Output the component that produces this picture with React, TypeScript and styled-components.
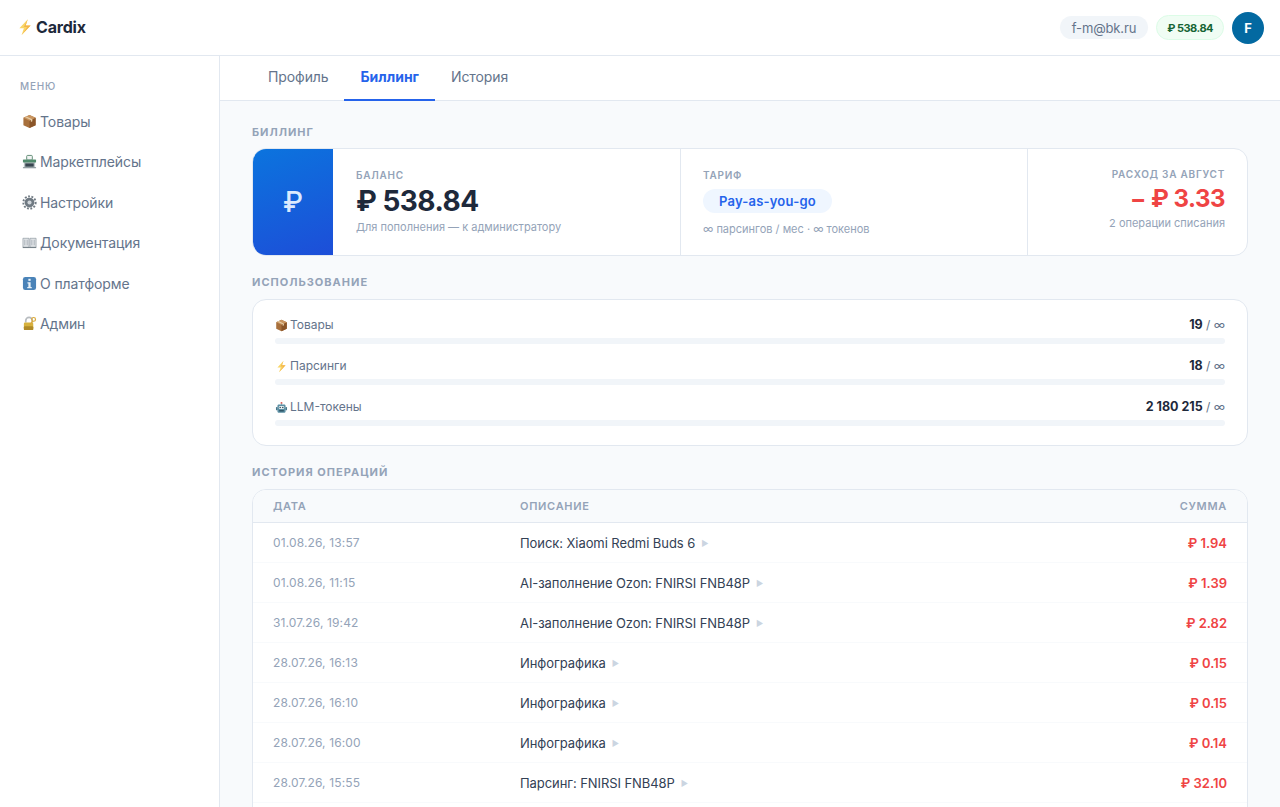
import * as React from 'react';
import styled, { createGlobalStyle } from 'styled-components';

const Global = createGlobalStyle`
  html, body {
    margin: 0;
    height: 100%;
    overflow: hidden;
    background: #f8fafc;
    font-family: Inter, "Noto Sans", sans-serif;
    color: #1e293b;
  }
  * { box-sizing: border-box; }
`;

const Page = styled.div`
  display: flex;
  flex-direction: column;
  height: 807px;
  overflow: hidden;
`;

const Header = styled.header`
  flex: 0 0 56px;
  display: flex;
  align-items: center;
  justify-content: space-between;
  padding: 0 16px;
  background: #fff;
  border-bottom: 1px solid #e2e8f0;
`;

const Logo = styled.div`
  display: flex;
  align-items: center;
  gap: 2px;
  margin-bottom: 2px;
  font-size: 16px;
  font-weight: 700;
  letter-spacing: -0.2px;
  color: #1e293b;
`;

const HeaderRight = styled.div`
  display: flex;
  align-items: center;
  gap: 8px;
`;

const EmailPill = styled.div`
  height: 23px;
  padding: 0 12px;
  display: flex;
  align-items: center;
  border-radius: 12px;
  background: #f1f5f9;
  color: #64748b;
  font-size: 13px;
  letter-spacing: -0.15px;
`;

const BalancePill = styled.div`
  height: 25px;
  padding: 0 10px;
  display: flex;
  align-items: center;
  border-radius: 13px;
  background: #f0fdf4;
  border: 1px solid #dcfce7;
  color: #166534;
  font-size: 11px;
  font-weight: 700;
  letter-spacing: -0.5px;
`;

const Avatar = styled.div`
  width: 32px;
  height: 32px;
  border-radius: 50%;
  background: #0369a1;
  color: #fff;
  font-size: 13px;
  font-weight: 700;
  display: flex;
  align-items: center;
  justify-content: center;
`;

const Body = styled.div`
  flex: 1;
  display: flex;
  min-height: 0;
`;

const Sidebar = styled.aside`
  flex: 0 0 220px;
  background: #fff;
  border-right: 1px solid #e2e8f0;
  padding: 24px 12px;
`;

const MenuTitle = styled.div`
  font-size: 10px;
  font-weight: 500;
  letter-spacing: 0.8px;
  line-height: 12px;
  color: #94a3b8;
  padding: 0 8px;
  margin-bottom: 9px;
`;

const MenuItem = styled.div`
  height: 40.5px;
  display: flex;
  align-items: center;
  gap: 3px;
  padding: 0 10px;
  font-size: 14px;
  letter-spacing: -0.1px;
  color: #64748b;
`;

const Main = styled.main`
  flex: 1;
  min-width: 0;
  display: flex;
  flex-direction: column;
`;

const Tabs = styled.nav`
  flex: 0 0 45px;
  min-height: 0;
  display: flex;
  padding: 0 32px;
  background: #fff;
  border-bottom: 1px solid #e2e8f0;
`;

const Tab = styled.div<{ $active?: boolean }>`
  padding: 0 16px 3px;
  height: 45px;
  display: flex;
  align-items: center;
  font-size: 14px;
  letter-spacing: ${p => (p.$active ? '0' : '-0.1px')};
  font-weight: ${p => (p.$active ? 700 : 400)};
  color: ${p => (p.$active ? '#2563eb' : '#64748b')};
  border-bottom: 2px solid ${p => (p.$active ? '#2563eb' : 'transparent')};
`;

const Content = styled.div`
  flex: 1;
  padding: 25px 32px 24px;
  background: #f8fafc;
`;

const SectionTitle = styled.h2`
  margin: 0 0 10px;
  font-size: 11px;
  line-height: 13px;
  font-weight: 700;
  letter-spacing: 1px;
  color: #94a3b8;
`;

const BillingCard = styled.section`
  display: flex;
  height: 108px;
  background: #fff;
  border: 1px solid #e2e8f0;
  border-radius: 14px;
  overflow: hidden;
  margin: -1px 0 20px;
`;

const RubleTile = styled.div`
  flex: 0 0 81px;
  background: linear-gradient(160deg, #0b74de, #1d4ed8);
  background-clip: padding-box;
  border-right: 1px solid #fff;
  color: #dbeafe;
  font-size: 28px;
  font-weight: 500;
  display: flex;
  align-items: center;
  justify-content: center;
`;

const Stat = styled.div<{ $width: number; $right?: boolean; $lift?: number }>`
  flex: ${p => (p.$width ? `0 0 ${p.$width}px` : '1')};
  display: flex;
  flex-direction: column;
  justify-content: center;
  padding: 0 22px ${p => p.$lift ?? 0}px;
  align-items: ${p => (p.$right ? 'flex-end' : 'flex-start')};
  border-right: ${p => (p.$right ? 'none' : '1px solid #e2e8f0')};
`;

const StatLabel = styled.div`
  font-size: 10px;
  line-height: 12px;
  font-weight: 600;
  letter-spacing: 0.75px;
  color: #94a3b8;
`;

const BalanceValue = styled.div`
  font-size: 28px;
  line-height: 34px;
  font-weight: 700;
  letter-spacing: -0.5px;
  color: #1e293b;
  margin-top: 3px;
`;

const SpendValue = styled.div`
  font-size: 24px;
  line-height: 30px;
  font-weight: 700;
  letter-spacing: -0.5px;
  color: #ef4444;
  margin-top: 4px;
`;

const StatHint = styled.div`
  font-size: 11px;
  line-height: 14px;
  color: #94a3b8;
  margin-top: 2px;
`;

const PlanPill = styled.div`
  height: 24px;
  margin: 8px 0 7px;
  padding: 0 16px;
  display: flex;
  align-items: center;
  border-radius: 12px;
  background: #eff6ff;
  color: #2563eb;
  font-size: 13px;
  font-weight: 600;
  letter-spacing: 0.2px;
`;

const UsageCard = styled.section`
  background: #fff;
  border: 1px solid #e2e8f0;
  border-radius: 14px;
  padding: 15px 22px 19px;
  margin-bottom: 20px;
  display: flex;
  flex-direction: column;
  gap: 12px;
`;

const UsageRow = styled.div`
  display: flex;
  flex-direction: column;
  gap: 3px;
`;

const UsageHead = styled.div`
  display: flex;
  justify-content: space-between;
  align-items: center;
  font-size: 12px;
  line-height: 20px;
  color: #64748b;
`;

const UsageName = styled.span`
  display: flex;
  align-items: center;
  gap: 2px;
`;

const UsageCount = styled.b`
  font-size: 12.5px;
  font-weight: 700;
  color: #1e293b;
`;

const Track = styled.div`
  height: 6px;
  border-radius: 3px;
  background: #f1f5f9;
`;

const HistoryCard = styled.section`
  min-height: 340px;
  background: #fff;
  border: 1px solid #e2e8f0;
  border-radius: 14px 14px 0 0;
  overflow: hidden;
`;

const Row = styled.div`
  display: grid;
  grid-template-columns: 247px 1fr auto;
  align-items: center;
  height: 40px;
  padding: 0 20px;
  border-bottom: 1px solid #f8fafc;
`;

const HeadRow = styled(Row)`
  height: 33px;
  padding-bottom: 1px;
  background: #f8fafc;
  border-bottom: 1px solid #e2e8f0;
  font-size: 11px;
  font-weight: 600;
  letter-spacing: 0.7px;
  color: #94a3b8;
`;

const DateCell = styled.div`
  font-size: 12px;
  letter-spacing: 0.13px;
  color: #94a3b8;
`;

const DescCell = styled.div`
  display: flex;
  align-items: center;
  gap: 6px;
  font-size: 13px;
  letter-spacing: -0.07px;
  color: #334155;
`;

const Caret = styled.span`
  font-size: 8px;
  color: #cbd5e1;
`;

const AmountCell = styled.div`
  font-size: 13px;
  font-weight: 600;
  color: #ef4444;
  text-align: right;
`;

const Emoji = styled.svg`
  flex: none;
  display: block;
`;

type IconProps = { size?: number };

const BoxIcon = ({ size = 15 }: IconProps) => (
  <Emoji width={size} height={size} viewBox="0 0 16 16">
    <path d="M8 1l6.5 3v8L8 15l-6.5-3V4z" fill="#a8703c" />
    <path d="M8 7.2l6.5-3.2v8L8 15z" fill="#8a5528" />
    <path d="M1.5 4L8 1l6.5 3L8 7.2z" fill="#c99560" />
    <path d="M4.5 2.6l6.5 3.1v2l-1.5.8v-2L3 3.3z" fill="#e6cfa8" />
  </Emoji>
);

const BoltIcon = ({ size = 15 }: IconProps) => (
  <Emoji width={size} height={size} viewBox="0 0 16 16">
    <path d="M10.5 1L3 9.2h4L5 15l8-8.4H8.6z" fill="#f9d667" />
    <path d="M10.5 1L8.6 6.6H13l-8 8.4 5-7H7z" fill="#f3b44a" />
  </Emoji>
);

const StoreIcon = ({ size = 15 }: IconProps) => (
  <Emoji width={size} height={size} viewBox="0 0 16 16">
    <rect x="2" y="6" width="12" height="9" fill="#b9c2c4" />
    <rect x="5" y="1.5" width="6" height="5" rx="1" fill="#f2f4f4" stroke="#5d8a72" strokeWidth="1" />
    <rect x="1" y="6" width="14" height="3" fill="#4f8a6b" />
    <rect x="3.5" y="10" width="9" height="3.5" fill="#384650" />
    <rect x="1" y="14" width="14" height="1.2" fill="#8b989c" />
  </Emoji>
);

const GearIcon = ({ size = 15 }: IconProps) => (
  <Emoji width={size} height={size} viewBox="0 0 16 16">
    <circle cx="8" cy="8" r="6.6" fill="none" stroke="#6f7982" strokeWidth="2" strokeDasharray="2 1.6" />
    <circle cx="8" cy="8" r="5.2" fill="#6f7982" />
    <circle cx="8" cy="8" r="2.2" fill="#cfd5da" />
  </Emoji>
);

const BookIcon = ({ size = 15 }: IconProps) => (
  <Emoji width={size} height={size} viewBox="0 0 16 16">
    <path d="M1 3.5h6.5V13H1z" fill="#e3e6e9" stroke="#8a949c" strokeWidth=".7" />
    <path d="M8.5 3.5H15V13H8.5z" fill="#e3e6e9" stroke="#8a949c" strokeWidth=".7" />
    <path d="M3 5v6M5.5 5v6M10.5 5v6M13 5v6" stroke="#98a2aa" strokeWidth=".8" />
    <path d="M0.8 13.4h14.4" stroke="#6d7880" strokeWidth="1" />
  </Emoji>
);

const InfoIcon = ({ size = 15 }: IconProps) => (
  <Emoji width={size} height={size} viewBox="0 0 16 16">
    <rect x="1" y="1" width="14" height="14" rx="2.5" fill="#4a83b8" />
    <rect x="6.8" y="3" width="2.4" height="2.2" fill="#e8f1f8" />
    <path d="M5.8 6.6h3.4v5h1.2v1.4H5.6v-1.4h1.2V8H5.8z" fill="#e8f1f8" />
  </Emoji>
);

const LockIcon = ({ size = 15 }: IconProps) => (
  <Emoji width={size} height={size} viewBox="0 0 16 16">
    <path d="M4 7V5a3.5 3.5 0 017 0v2" fill="none" stroke="#b8bcc0" strokeWidth="1.8" />
    <rect x="2" y="7" width="10" height="8" rx="1.2" fill="#d7b23e" />
    <rect x="2" y="11" width="10" height="4" rx="1" fill="#b08a28" />
    <circle cx="12.4" cy="3.6" r="2" fill="none" stroke="#d9a83a" strokeWidth="1.3" />
    <path d="M11.4 5.2L8.6 9.4" stroke="#d9a83a" strokeWidth="1.3" />
  </Emoji>
);

const RobotIcon = ({ size = 15 }: IconProps) => (
  <Emoji width={size} height={size} viewBox="0 0 16 16">
    <circle cx="8" cy="2.4" r="1.2" fill="#e0564f" />
    <rect x="7.5" y="3" width="1" height="2" fill="#8ca0ab" />
    <path d="M3 6c0-1 1-1.6 2-1.6h6c1 0 2 .6 2 1.6v7c0 1-1 1.6-2 1.6H5c-1 0-2-.6-2-1.6z" fill="#5a8ea3" />
    <rect x="1.2" y="7.5" width="2" height="4" rx=".8" fill="#47788c" />
    <rect x="12.8" y="7.5" width="2" height="4" rx=".8" fill="#47788c" />
    <rect x="4.6" y="6.2" width="6.8" height="3.6" rx="1.6" fill="#e8f0f3" />
    <circle cx="6.4" cy="8" r=".9" fill="#27424f" />
    <circle cx="9.6" cy="8" r=".9" fill="#27424f" />
    <rect x="5" y="11" width="6" height="2" rx=".6" fill="#2f5566" />
  </Emoji>
);

const menu = [
  { icon: <BoxIcon />, label: 'Товары' },
  { icon: <StoreIcon />, label: 'Маркетплейсы' },
  { icon: <GearIcon />, label: 'Настройки' },
  { icon: <BookIcon />, label: 'Документация' },
  { icon: <InfoIcon />, label: 'О платформе' },
  { icon: <LockIcon />, label: 'Админ' },
];

const usage = [
  { icon: <BoxIcon size={13} />, label: 'Товары', count: '19' },
  { icon: <BoltIcon size={13} />, label: 'Парсинги', count: '18' },
  { icon: <RobotIcon size={13} />, label: 'LLM-токены', count: '2 180 215' },
];

const operations = [
  ['01.08.26, 13:57', 'Поиск: Xiaomi Redmi Buds 6', '₽ 1.94'],
  ['01.08.26, 11:15', 'AI-заполнение Ozon: FNIRSI FNB48P', '₽ 1.39'],
  ['31.07.26, 19:42', 'AI-заполнение Ozon: FNIRSI FNB48P', '₽ 2.82'],
  ['28.07.26, 16:13', 'Инфографика', '₽ 0.15'],
  ['28.07.26, 16:10', 'Инфографика', '₽ 0.15'],
  ['28.07.26, 16:00', 'Инфографика', '₽ 0.14'],
  ['28.07.26, 15:55', 'Парсинг: FNIRSI FNB48P', '₽ 32.10'],
];

export default function App() {
  return (
    <Page>
      <Global />
      <Header>
        <Logo>
          <BoltIcon size={18} />
          Cardix
        </Logo>
        <HeaderRight>
          <EmailPill>f-m@bk.ru</EmailPill>
          <BalancePill>₽ 538.84</BalancePill>
          <Avatar>F</Avatar>
        </HeaderRight>
      </Header>
      <Body>
        <Sidebar>
          <MenuTitle>МЕНЮ</MenuTitle>
          {menu.map(item => (
            <MenuItem key={item.label}>
              {item.icon}
              {item.label}
            </MenuItem>
          ))}
        </Sidebar>
        <Main>
          <Tabs>
            <Tab>Профиль</Tab>
            <Tab $active>Биллинг</Tab>
            <Tab>История</Tab>
          </Tabs>
          <Content>
            <SectionTitle>БИЛЛИНГ</SectionTitle>
            <BillingCard>
              <RubleTile>₽</RubleTile>
              <Stat $width={347} $lift={2}>
                <StatLabel>БАЛАНС</StatLabel>
                <BalanceValue>₽ 538.84</BalanceValue>
                <StatHint>Для пополнения — к администратору</StatHint>
              </Stat>
              <Stat $width={347}>
                <StatLabel>ТАРИФ</StatLabel>
                <PlanPill>Pay-as-you-go</PlanPill>
                <StatHint>∞ парсингов / мес · ∞ токенов</StatHint>
              </Stat>
              <Stat $width={0} $right $lift={6}>
                <StatLabel>РАСХОД ЗА АВГУСТ</StatLabel>
                <SpendValue>− ₽ 3.33</SpendValue>
                <StatHint>2 операции списания</StatHint>
              </Stat>
            </BillingCard>
            <SectionTitle>ИСПОЛЬЗОВАНИЕ</SectionTitle>
            <UsageCard>
              {usage.map(item => (
                <UsageRow key={item.label}>
                  <UsageHead>
                    <UsageName>
                      {item.icon}
                      {item.label}
                    </UsageName>
                    <span>
                      <UsageCount>{item.count}</UsageCount> / ∞
                    </span>
                  </UsageHead>
                  <Track />
                </UsageRow>
              ))}
            </UsageCard>
            <SectionTitle>ИСТОРИЯ ОПЕРАЦИЙ</SectionTitle>
            <HistoryCard>
              <HeadRow>
                <div>ДАТА</div>
                <div>ОПИСАНИЕ</div>
                <div>СУММА</div>
              </HeadRow>
              {operations.map(([date, desc, amount]) => (
                <Row key={date}>
                  <DateCell>{date}</DateCell>
                  <DescCell>
                    {desc}
                    <Caret>▶</Caret>
                  </DescCell>
                  <AmountCell>{amount}</AmountCell>
                </Row>
              ))}
            </HistoryCard>
          </Content>
        </Main>
      </Body>
    </Page>
  );
}
